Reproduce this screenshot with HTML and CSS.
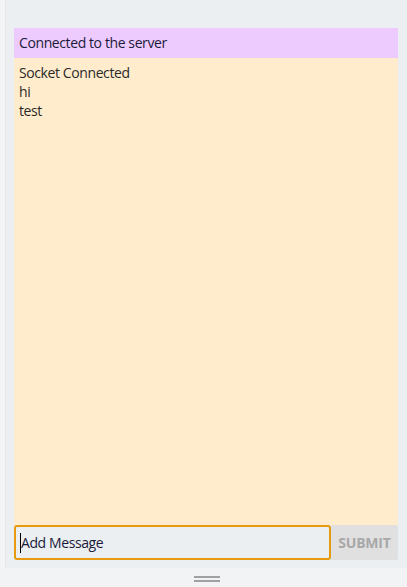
FILE: index.html
```html
<!DOCTYPE html>
<html>
<head>
<meta charset="utf-8">
<link rel="stylesheet" href="styles.css">
</head>
<body>
<div class="frame">
  <div class="edge"></div>
  <div class="main">
    <div class="chat">
      <div class="status">Connected to the server</div>
      <div class="messages">
        <div class="msg">Socket Connected</div>
        <div class="msg">hi</div>
        <div class="msg">test</div>
      </div>
      <form class="composer">
        <div class="input"><span class="caret"></span><span class="placeholder">Add Message</span></div>
        <button type="button" class="submit">SUBMIT</button>
      </form>
    </div>
  </div>
</div>
<div class="footer"><div class="grip"></div></div>
</body>
</html>
```
FILE: styles.css
```css
html, body {
  margin: 0;
  padding: 0;
  height: 100%;
}
body {
  background: #f2f3f5;
  font-family: "Open Sans", "Noto Sans", sans-serif;
  font-size: 14px;
  color: #222;
  display: flex;
  flex-direction: column;
}
.frame {
  display: flex;
  height: 568px;
}
.edge {
  width: 5px;
  background: #f3f4f5;
  border-right: 1px solid #e4e6e8;
}
.main {
  flex: 1;
  background: #eceff1;
  padding: 28px 9px 8px 8px;
  display: flex;
}
.chat {
  flex: 1;
  display: flex;
  flex-direction: column;
}
.status {
  background: #eecbff;
  height: 30px;
  line-height: 30px;
  padding-left: 5px;
  color: #1a1a3a;
  letter-spacing: -0.4px;
}
.messages {
  flex: 1;
  background: #ffeccc;
  padding: 5px 5px;
  line-height: 19px;
  color: #2a2a2a;
  letter-spacing: -0.4px;
}
.composer {
  margin: 0;
  display: flex;
  height: 35px;
}
.input {
  flex: 1;
  border: 2px solid #e69a10;
  border-radius: 3px;
  background: #eceff1;
  display: flex;
  align-items: center;
  padding-left: 4px;
  color: #1a1a3a;
  letter-spacing: -0.4px;
}
.caret {
  width: 1px;
  height: 20px;
  background: #000;
}
.submit {
  width: 67px;
  border: none;
  background: #e0e0e0;
  color: #a8a8a8;
  font-family: "Open Sans", "Noto Sans", sans-serif;
  font-weight: 700;
  font-size: 14px;
  letter-spacing: -0.2px;
  padding: 0;
  border-radius: 0 2px 2px 0;
}
.footer {
  flex: 1;
  display: flex;
  justify-content: center;
  padding-top: 8px;
  padding-left: 7px;
}
.grip {
  width: 26px;
  height: 2px;
  border-top: 2px solid #a0a0a0;
  border-bottom: 2px solid #a0a0a0;
}
```
